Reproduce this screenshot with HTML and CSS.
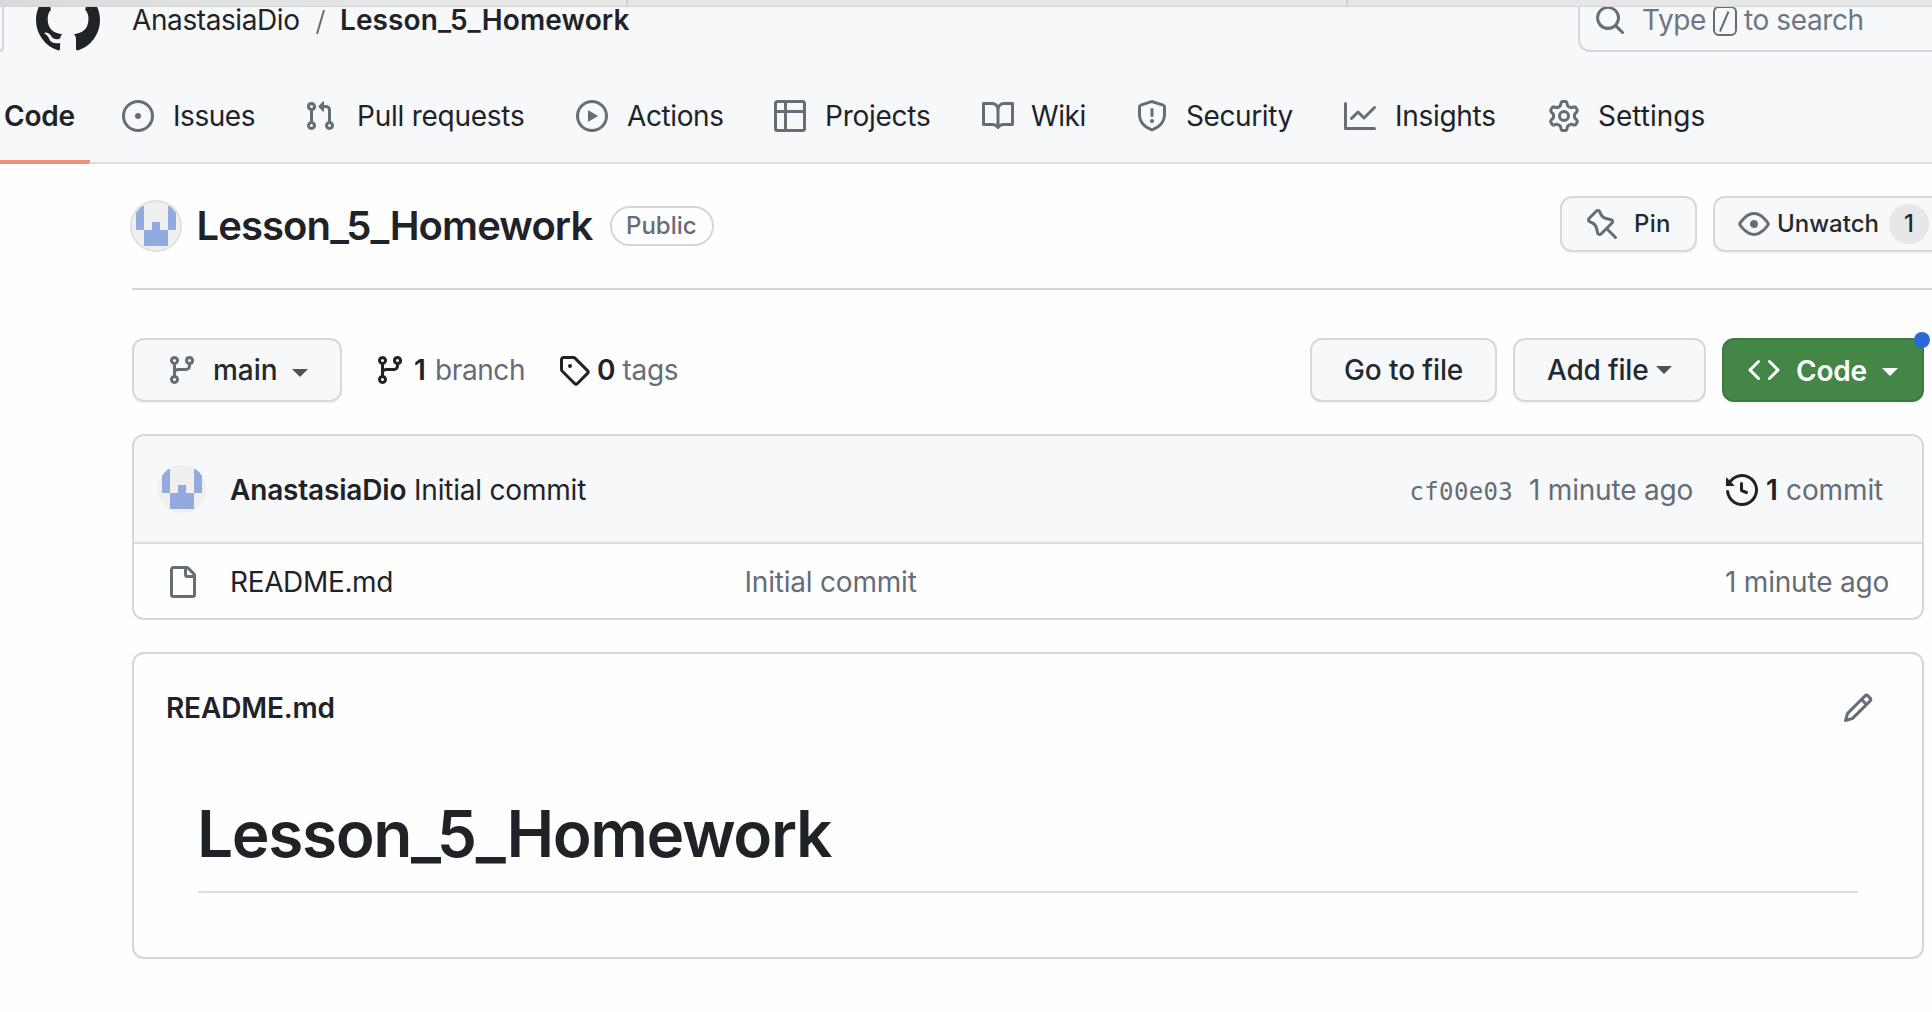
FILE: index.html
```html
<!DOCTYPE html>
<html lang="en">
<head>
<meta charset="utf-8">
<title>AnastasiaDio/Lesson_5_Homework</title>
<link rel="stylesheet" href="styles.css">
</head>
<body>
<svg class="defs" aria-hidden="true">
  <symbol id="branch" viewBox="0 0 16 16"><path d="M9.5 3.25a2.25 2.25 0 1 1 3 2.122V6A2.5 2.5 0 0 1 10 8.5H6a1 1 0 0 0-1 1v1.128a2.251 2.251 0 1 1-1.5 0V5.372a2.25 2.25 0 1 1 1.5 0v1.836A2.493 2.493 0 0 1 6 7h4a1 1 0 0 0 1-1v-.628A2.25 2.25 0 0 1 9.5 3.25Zm-6 0a.75.75 0 1 0 1.5 0 .75.75 0 0 0-1.5 0Zm8.25-.75a.75.75 0 1 0 0 1.5.75.75 0 0 0 0-1.5ZM4.25 12a.75.75 0 1 0 0 1.5.75.75 0 0 0 0-1.5Z"/></symbol>
  <symbol id="identicon" viewBox="0 0 48 48"><path d="M0 0h48v48H0z" fill="#efefef"/><path fill="#92aadd" d="M4 4h8v24H4zM36 4h8v24h-8zM20 20h8v8h-8zM12 28h24v16H12z"/></symbol>
</svg>
<div class="browser-edge"><i class="tab tab-a"></i><i class="tab tab-b"></i></div>
<header class="site-header">
  <div class="global-bar">
    <span class="menu-button"></span>
    <svg class="logo" viewBox="0 0 16 16"><path d="M8 0c4.42 0 8 3.58 8 8a8.013 8.013 0 0 1-5.45 7.59c-.4.08-.55-.17-.55-.38 0-.27.01-1.13.01-2.2 0-.75-.25-1.23-.54-1.48 1.78-.2 3.65-.88 3.65-3.95 0-.88-.31-1.59-.82-2.15.08-.2.36-1.02-.08-2.12 0 0-.67-.22-2.2.82-.64-.18-1.32-.27-2-.27-.68 0-1.36.09-2 .27-1.53-1.03-2.2-.82-2.2-.82-.44 1.1-.16 1.92-.08 2.12-.51.56-.82 1.28-.82 2.15 0 3.06 1.86 3.75 3.64 3.95-.23.2-.44.55-.51 1.07-.46.21-1.61.55-2.33-.66-.15-.24-.6-.83-1.23-.82-.67.01-.27.38.01.53.34.19.73.9.82 1.13.16.45.68 1.31 2.69.94 0 .67.01 1.3.01 1.49 0 .21-.15.45-.55.38A7.995 7.995 0 0 1 0 8c0-4.42 3.58-8 8-8Z"/></svg>
    <div class="crumbs"><span class="t owner">AnastasiaDio</span><svg class="slash" viewBox="0 0 9 26"><path d="M8 1 1 25" stroke="#656d76" stroke-width="2" fill="none"/></svg><b class="t repo">Lesson_5_Homework</b></div>
    <div class="search">
      <svg class="icon" viewBox="0 0 16 16"><path d="M10.68 11.74a6 6 0 0 1-7.922-8.982 6 6 0 0 1 8.982 7.922l3.04 3.04a.749.749 0 0 1-.326 1.275.749.749 0 0 1-.734-.215ZM11.5 7a4.499 4.499 0 1 0-8.997 0A4.499 4.499 0 0 0 11.5 7Z"/></svg>
      <span class="t type">Type</span><svg class="kbd" viewBox="0 0 24 30"><rect x="1" y="1" width="22" height="28" rx="5"/><path d="M15.500 5.500 7 25.500"/></svg><span class="t tosearch">to search</span>
    </div>
  </div>
  <nav class="repo-nav">
    <a class="nav-item current"><span class="t">Code</span></a>
    <a class="nav-item issues"><svg class="icon" viewBox="0 0 16 16"><path d="M8 9.5a1.500 1.500 0 1 0 0-3 1.500 1.500 0 0 0 0 3Z"/><path d="M8 0a8 8 0 1 1 0 16A8 8 0 0 1 8 0ZM1.500 8a6.500 6.500 0 1 0 13 0 6.500 6.500 0 0 0-13 0Z"/></svg><span class="t">Issues</span></a>
    <a class="nav-item pulls"><svg class="icon" viewBox="0 0 16 16"><path d="M1.500 3.250a2.250 2.250 0 1 1 3 2.122v5.256a2.251 2.251 0 1 1-1.500 0V5.372A2.250 2.250 0 0 1 1.500 3.250Zm5.677-.177L9.573.677A.250.250 0 0 1 10 .854V2.500h1A2.500 2.500 0 0 1 13.500 5v5.628a2.251 2.251 0 1 1-1.500 0V5a1 1 0 0 0-1-1h-1v1.646a.250.250 0 0 1-.427.177L7.177 3.427a.250.250 0 0 1 0-.354ZM3.750 2.500a.750.750 0 1 0 0 1.500.750.750 0 0 0 0-1.500Zm0 9.500a.750.750 0 1 0 0 1.500.750.750 0 0 0 0-1.500Zm8.250.750a.750.750 0 1 0 1.500 0 .750.750 0 0 0-1.500 0Z"/></svg><span class="t">Pull requests</span></a>
    <a class="nav-item actions"><svg class="icon" viewBox="0 0 16 16"><path d="M8 0a8 8 0 1 1 0 16A8 8 0 0 1 8 0ZM1.500 8a6.500 6.500 0 1 0 13 0 6.500 6.500 0 0 0-13 0Zm4.879-2.773 4.264 2.559a.250.250 0 0 1 0 .428l-4.264 2.559A.250.250 0 0 1 6 10.559V5.442a.250.250 0 0 1 .379-.215Z"/></svg><span class="t">Actions</span></a>
    <a class="nav-item projects"><svg class="icon" viewBox="0 0 16 16"><path d="M0 1.750C0 .784.784 0 1.750 0h12.500C15.216 0 16 .784 16 1.750v12.500A1.750 1.750 0 0 1 14.250 16H1.750A1.750 1.750 0 0 1 0 14.250ZM6.500 6.500v8h7.750a.250.250 0 0 0 .250-.250V6.500Zm8-1.500V1.750a.250.250 0 0 0-.250-.250H6.500V5Zm-13 1.500v7.750c0 .138.112.250.250.250H5v-8ZM5 5V1.500H1.750a.250.250 0 0 0-.250.250V5Z"/></svg><span class="t">Projects</span></a>
    <a class="nav-item wiki"><svg class="icon" viewBox="0 0 16 16"><path d="M0 1.750A.750.750 0 0 1 .750 1h4.253c1.227 0 2.317.590 3 1.501A3.743 3.743 0 0 1 11.006 1h4.245a.750.750 0 0 1 .750.750v10.500a.750.750 0 0 1-.750.750h-4.507a2.250 2.250 0 0 0-1.591.659l-.622.621a.750.750 0 0 1-1.060 0l-.622-.621A2.250 2.250 0 0 0 5.258 13H.750a.750.750 0 0 1-.750-.750Zm7.251 10.324.004-5.073-.002-2.253A2.250 2.250 0 0 0 5.003 2.500H1.500v9h3.757a3.750 3.750 0 0 1 1.994.574ZM8.755 4.750l-.004 7.322a3.752 3.752 0 0 1 1.992-.572H14.500v-9h-3.495a2.250 2.250 0 0 0-2.250 2.250Z"/></svg><span class="t">Wiki</span></a>
    <a class="nav-item security"><svg class="icon" viewBox="0 0 16 16"><path d="M7.467.133a1.748 1.748 0 0 1 1.066 0l5.250 1.680A1.750 1.750 0 0 1 15 3.480V7c0 1.566-.320 3.182-1.303 4.682-.983 1.498-2.585 2.813-5.032 3.855a1.697 1.697 0 0 1-1.330 0c-2.447-1.042-4.049-2.357-5.032-3.855C1.320 10.182 1 8.566 1 7V3.480a1.755 1.755 0 0 1 1.217-1.667Zm.610 1.429a.250.250 0 0 0-.153 0l-5.250 1.680a.250.250 0 0 0-.174.238V7c0 1.358.275 2.666 1.057 3.860.784 1.194 2.121 2.340 4.366 3.297a.196.196 0 0 0 .154 0c2.245-.956 3.582-2.104 4.366-3.298C13.225 9.666 13.500 8.360 13.500 7V3.480a.251.251 0 0 0-.174-.237l-5.250-1.680ZM8.750 4.750v3a.750.750 0 0 1-1.500 0v-3a.750.750 0 0 1 1.500 0ZM9 10.500a1 1 0 1 1-2 0 1 1 0 0 1 2 0Z"/></svg><span class="t">Security</span></a>
    <a class="nav-item insights"><svg class="icon" viewBox="0 0 16 16"><path d="M1.500 1.750V13.500h13.750a.750.750 0 0 1 0 1.500H.750a.750.750 0 0 1-.750-.750V1.750a.750.750 0 0 1 1.500 0Zm14.280 2.530-5.250 5.250a.750.750 0 0 1-1.060 0L7 7.060 4.280 9.780a.751.751 0 0 1-1.042-.018.751.751 0 0 1-.018-1.042l3.250-3.250a.750.750 0 0 1 1.060 0L10 7.940l4.720-4.720a.751.751 0 0 1 1.042.018.751.751 0 0 1 .018 1.042Z"/></svg><span class="t">Insights</span></a>
    <a class="nav-item settings"><svg class="icon" viewBox="0 0 16 16"><path d="M8 0a8.200 8.200 0 0 1 .701.031C9.444.095 9.990.645 10.160 1.290l.288 1.107c.018.066.079.158.212.224.231.114.454.243.668.386.123.082.233.090.299.071l1.103-.303c.644-.176 1.392.021 1.820.630.270.385.506.792.704 1.218.315.675.111 1.422-.364 1.891l-.814.806c-.049.048-.098.147-.088.294.016.257.016.515 0 .772-.010.147.038.246.088.294l.814.806c.475.469.679 1.216.364 1.891a7.977 7.977 0 0 1-.704 1.217c-.428.610-1.176.807-1.820.630l-1.102-.302c-.067-.019-.177-.011-.300.071a5.909 5.909 0 0 1-.668.386c-.133.066-.194.158-.211.224l-.290 1.106c-.168.646-.715 1.196-1.458 1.260a8.006 8.006 0 0 1-1.402 0c-.743-.064-1.289-.614-1.458-1.260l-.289-1.106c-.018-.066-.079-.158-.212-.224a5.738 5.738 0 0 1-.668-.386c-.123-.082-.233-.090-.299-.071l-1.103.303c-.644.176-1.392-.021-1.820-.630a8.120 8.120 0 0 1-.704-1.218c-.315-.675-.111-1.422.363-1.891l.815-.806c.050-.048.098-.147.088-.294a6.214 6.214 0 0 1 0-.772c.010-.147-.038-.246-.088-.294l-.815-.806C.635 6.045.431 5.298.746 4.623a7.920 7.920 0 0 1 .704-1.217c.428-.610 1.176-.807 1.820-.630l1.102.302c.067.019.177.011.300-.071.214-.143.437-.272.668-.386.133-.066.194-.158.211-.224l.290-1.106C6.009.645 6.556.095 7.299.030 7.530.010 7.764 0 8 0Zm-.571 1.525c-.036.003-.108.036-.137.146l-.289 1.105c-.147.561-.549.967-.998 1.189-.173.086-.340.183-.500.290-.417.278-.970.423-1.529.270l-1.103-.303c-.109-.030-.175.016-.195.045-.220.312-.412.644-.573.990-.014.031-.021.110.059.190l.815.806c.411.406.562.957.530 1.456a4.709 4.709 0 0 0 0 .582c.032.499-.119 1.050-.530 1.456l-.815.806c-.081.080-.073.159-.059.190.162.346.353.677.573.989.020.030.085.076.195.046l1.102-.303c.560-.153 1.113-.008 1.530.270.161.107.328.204.501.290.447.222.850.629.997 1.189l.289 1.105c.029.109.101.143.137.146a6.600 6.600 0 0 0 1.142 0c.036-.003.108-.036.137-.146l.289-1.105c.147-.561.549-.967.998-1.189.173-.086.340-.183.500-.290.417-.278.970-.423 1.529-.270l1.103.303c.109.029.175-.016.195-.045.220-.313.411-.644.573-.990.014-.031.021-.110-.059-.190l-.815-.806c-.411-.406-.562-.957-.530-1.456a4.709 4.709 0 0 0 0-.582c-.032-.499.119-1.050.530-1.456l.815-.806c.081-.080.073-.159.059-.190a6.464 6.464 0 0 0-.573-.989c-.020-.030-.085-.076-.195-.046l-1.102.303c-.560.153-1.113.008-1.530-.270a4.440 4.440 0 0 0-.501-.290c-.447-.222-.850-.629-.997-1.189l-.289-1.105c-.029-.110-.101-.143-.137-.146a6.600 6.600 0 0 0-1.142 0ZM11 8a3 3 0 1 1-6 0 3 3 0 0 1 6 0ZM9.500 8a1.500 1.500 0 1 0-3.001.001A1.500 1.500 0 0 0 9.500 8Z"/></svg><span class="t">Settings</span></a>
  </nav>
</header>
<main class="content">
  <div class="repo-title">
    <svg class="avatar ringed"><use href="#identicon"/></svg>
    <h2 class="t name">Lesson_5_Homework</h2>
    <span class="badge"><span class="t">Public</span></span>
    <a class="button small pin"><svg class="icon" viewBox="0 0 16 16"><path d="m11.294.984 3.722 3.722a1.750 1.750 0 0 1-.504 2.826l-1.327.613a3.089 3.089 0 0 0-1.707 2.084l-.584 2.454c-.317 1.332-1.972 1.800-2.940.832L5.750 11.311 1.780 15.280a.749.749 0 1 1-1.060-1.060l3.969-3.970-2.204-2.204c-.968-.968-.500-2.623.832-2.940l2.454-.584a3.080 3.080 0 0 0 2.084-1.707l.613-1.327a1.750 1.750 0 0 1 2.826-.504ZM6.283 9.723l2.732 2.731a.250.250 0 0 0 .420-.119l.584-2.454a4.586 4.586 0 0 1 2.537-3.098l1.328-.613a.250.250 0 0 0 .072-.404l-3.722-3.722a.250.250 0 0 0-.404.072l-.613 1.328a4.584 4.584 0 0 1-3.098 2.537l-2.454.584a.250.250 0 0 0-.119.420l2.731 2.732Z" transform="matrix(-1 0 0 1 16 0)"/></svg><span class="t">Pin</span></a>
    <a class="button small watch"><svg class="icon" viewBox="0 0 16 16"><path d="M8 2c1.981 0 3.671.992 4.933 2.078 1.270 1.091 2.187 2.345 2.637 3.023a1.620 1.620 0 0 1 0 1.798c-.450.678-1.367 1.932-2.637 3.023C11.670 13.008 9.981 14 8 14c-1.981 0-3.671-.992-4.933-2.078C1.797 10.830.880 9.576.430 8.898a1.620 1.620 0 0 1 0-1.798c.450-.677 1.367-1.931 2.637-3.022C4.330 2.992 6.019 2 8 2ZM1.679 7.932a.120.120 0 0 0 0 .136c.411.622 1.241 1.750 2.366 2.717C5.176 11.758 6.527 12.500 8 12.500c1.473 0 2.825-.742 3.955-1.715 1.124-.967 1.954-2.096 2.366-2.717a.120.120 0 0 0 0-.136c-.412-.621-1.242-1.750-2.366-2.717C10.824 4.242 9.473 3.500 8 3.500c-1.473 0-2.825.742-3.955 1.715-1.124.967-1.954 2.096-2.366 2.717ZM8 10a2 2 0 1 1-.001-3.999A2 2 0 0 1 8 10Z"/></svg><span class="t">Unwatch</span><span class="counter">1</span></a>
  </div>
  <div class="file-nav">
    <a class="button branch-select"><svg class="icon"><use href="#branch"/></svg><span class="t">main</span><i class="caret"></i></a>
    <a class="stat branches"><svg class="icon"><use href="#branch"/></svg><b class="t">1</b><span class="t">branch</span></a>
    <a class="stat tags"><svg class="icon" viewBox="0 0 16 16"><path d="M1 7.775V2.750C1 1.784 1.784 1 2.750 1h5.025c.464 0 .910.184 1.238.513l6.250 6.250a1.750 1.750 0 0 1 0 2.474l-5.026 5.026a1.750 1.750 0 0 1-2.474 0l-6.250-6.250A1.752 1.752 0 0 1 1 7.775Zm1.500 0c0 .066.026.130.073.177l6.250 6.250a.250.250 0 0 0 .354 0l5.025-5.025a.250.250 0 0 0 0-.354l-6.250-6.250a.250.250 0 0 0-.177-.073H2.750a.250.250 0 0 0-.250.250ZM6 5a1 1 0 1 1 0 2 1 1 0 0 1 0-2Z"/></svg><b class="t">0</b><span class="t">tags</span></a>
    <a class="button goto"><span class="t">Go to file</span></a>
    <a class="button add"><span class="t">Add file</span><i class="caret"></i></a>
    <a class="button code"><svg class="icon" viewBox="0 0 16 16"><path d="m11.280 3.220 4.250 4.250a.750.750 0 0 1 0 1.060l-4.250 4.250a.749.749 0 0 1-1.275-.326.749.749 0 0 1 .215-.734L13.940 8l-3.720-3.720a.749.749 0 0 1 .326-1.275.749.749 0 0 1 .734.215Zm-6.560 0a.751.751 0 0 1 1.042.018.751.751 0 0 1 .018 1.042L2.060 8l3.720 3.720a.749.749 0 0 1-.326 1.275.749.749 0 0 1-.734-.215L.470 8.530a.750.750 0 0 1 0-1.060Z"/></svg><span class="t">Code</span><i class="caret"></i><i class="dot"></i></a>
  </div>
  <section class="panel files">
    <div class="commit-row">
      <svg class="avatar"><use href="#identicon"/></svg>
      <b class="t author">AnastasiaDio</b><span class="t message">Initial commit</span>
      <span class="t sha">cf00e03</span><span class="t when">1 minute ago</span>
      <svg class="icon history" viewBox="0 0 16 16"><path d="m.427 1.927 1.215 1.215a8.002 8.002 0 1 1-1.600 5.685.750.750 0 1 1 1.493-.154 6.500 6.500 0 1 0 1.180-4.458l1.358 1.358A.250.250 0 0 1 3.896 6H.250A.250.250 0 0 1 0 5.750V2.104a.250.250 0 0 1 .427-.177ZM7.750 4a.750.750 0 0 1 .750.750v2.992l2.028.812a.750.750 0 0 1-.557 1.392l-2.500-1A.751.751 0 0 1 7 8.250v-3.500A.750.750 0 0 1 7.750 4Z"/></svg><b class="t num">1</b><span class="t commits">commit</span>
    </div>
    <div class="file-row">
      <svg class="icon" viewBox="0 0 16 16"><path d="M2 1.750C2 .784 2.784 0 3.750 0h6.586c.464 0 .909.184 1.237.513l2.914 2.914c.329.328.513.773.513 1.237v9.586A1.750 1.750 0 0 1 13.250 16h-9.500A1.750 1.750 0 0 1 2 14.250Zm1.750-.250a.250.250 0 0 0-.250.250v12.500c0 .138.112.250.250.250h9.500a.250.250 0 0 0 .250-.250V6h-2.750A1.750 1.750 0 0 1 9 4.250V1.500Zm6.750.062V4.250c0 .138.112.250.250.250h2.688l-.011-.013-2.914-2.914-.013-.011Z"/></svg>
      <span class="t file">README.md</span><span class="t desc">Initial commit</span><span class="t ago">1 minute ago</span>
    </div>
  </section>
  <section class="panel readme">
    <div class="readme-head"><b class="t">README.md</b><svg class="icon" viewBox="0 0 16 16"><path d="M11.013 1.427a1.750 1.750 0 0 1 2.474 0l1.086 1.086a1.750 1.750 0 0 1 0 2.474l-8.610 8.610c-.210.210-.470.364-.756.445l-3.251.930a.750.750 0 0 1-.927-.928l.929-3.250c.081-.286.235-.547.445-.758l8.610-8.610Zm.176 4.823L9.750 4.810l-6.286 6.287a.253.253 0 0 0-.064.108l-.558 1.953 1.953-.558a.253.253 0 0 0 .108-.064Zm1.238-3.763a.250.250 0 0 0-.354 0L10.811 3.750l1.439 1.440 1.263-1.263a.250.250 0 0 0 0-.354Z"/></svg></div>
    <h1 class="readme-title"><span class="t">Lesson_5_Homework</span></h1>
  </section>
</main>
</body>
</html>
```
FILE: styles.css
```css
* { box-sizing: border-box; }
body { margin: 0; height: 1012px; overflow: hidden; background: #fefefe; color: #1f2328; font: 400 28px/36px Inter, "Liberation Sans", sans-serif; }
b { font-weight: 600; }
svg { display: block; flex: none; fill: currentColor; }
i { display: block; }
.defs { position: absolute; width: 0; height: 0; }
.icon { width: 32px; height: 32px; color: #656d76; }
.t { white-space: nowrap; flex: none; }

/* Bottom edge of the browser toolbar, over the page */
.browser-edge { position: absolute; z-index: 2; top: 0; left: 0; width: 100%; height: 7px; display: flex; background: linear-gradient(90deg, #d9dbda, #e6e6e6 420px); border-bottom: 1px solid #d2d4d5; }
.tab { flex: none; height: 6px; border-right: 2px solid #d0d1d1; }
.tab-a { width: 628px; }
.tab-b { width: 720px; }

/* Header */
.site-header { height: 164px; background: linear-gradient(#d8dee4, #d8dee4) 0 100% / 100% 2px no-repeat #f6f8fa; }
.global-bar { display: flex; height: 68px; }
.menu-button { width: 4px; height: 52px; border: solid #d0d7de; border-width: 0 2px 2px 0; border-radius: 0 0 12px 0; }
.logo { width: 64px; height: 64px; margin: -12px 0 0 32px; }
.crumbs { display: flex; align-items: center; height: 40px; margin-left: 32px; }
.owner { width: 184px; letter-spacing: -.4px; }
.slash { width: 9px; height: 26px; margin: 4px 15px 0 0; }
.repo { letter-spacing: .1px; }
.search { display: flex; align-items: center; width: 354px; height: 52px; margin-left: auto; padding: 0 0 10px 14px; border: 2px solid #d0d7de; border-width: 0 0 2px 2px; border-radius: 0 0 0 12px; color: #6e7781; }
.search .icon { margin-top: -1px; }
.type { width: 71px; margin-left: 16px; letter-spacing: -.4px; }
.kbd { width: 24px; height: 30px; margin: 2px 7px 0 0; fill: none; stroke: #656d76; stroke-width: 2; }
.tosearch { letter-spacing: -.4px; }

.repo-nav { display: flex; height: 96px; }
.nav-item { display: flex; flex: none; align-items: center; height: 96px; gap: 19px; }
.current { width: 90px; margin-right: 32px; padding-left: 4px; background: linear-gradient(#ee9277, #ee9277) 0 100% / 100% 4px no-repeat; border-radius: 0 0 2px 0; font-weight: 600; letter-spacing: -.2px; }
.issues { width: 182px; letter-spacing: -.45px; }
.pulls { width: 272px; gap: 21px; letter-spacing: -.25px; }
.actions { width: 198px; letter-spacing: -.4px; }
.projects { width: 208px; letter-spacing: -.25px; }
.wiki { width: 154px; gap: 17px; letter-spacing: -.4px; }
.security { width: 208px; gap: 18px; letter-spacing: -.4px; }
.insights { width: 204px; letter-spacing: -.3px; }
.settings { gap: 18px; }

/* Repository title */
.content { padding-left: 132px; }
.repo-title { display: flex; align-items: center; height: 126px; border-bottom: 2px solid #d0d7de; }
.avatar { width: 48px; height: 48px; border-radius: 50%; }
.ringed { box-shadow: 0 0 0 2px #dcdee0; }
.name { width: 413.500px; margin: 0 0 0 16.500px; font-size: 40px; font-weight: 620; letter-spacing: -.9px; }
.badge { width: 104px; height: 40px; padding: 0 14px; border: 2px solid #d0d7de; border-radius: 20px; color: #656d76; font-size: 24px; font-weight: 500; }
.button { position: relative; display: flex; flex: none; align-items: center; height: 64px; border: 2px solid #d6d9db; border-radius: 12px; background: #f6f8fa; box-shadow: 0 2px 0 rgba(31, 35, 40, .04); color: #24292f; font-weight: 500; }
.small { height: 56px; margin-top: -4px; font-size: 24px; }
.pin { width: 137px; margin-left: auto; padding-left: 24px; letter-spacing: .3px; }
.pin .icon { margin: -1px 16px 0 0; }
.watch { width: 250px; margin-left: 16px; margin-right: -31px; padding-left: 23px; }
.watch .t { width: 112px; margin-left: 7px; }
.counter { width: 40px; height: 40px; border-radius: 20px; background: #e5e7e9; line-height: 40px; text-align: center; }

/* Branch and file actions */
.file-nav { display: flex; align-items: center; height: 64px; margin: 48px 8px 32px 0; }
.caret { border: 8px solid transparent; border-top-color: #4f5358; border-bottom: 0; }
.branch-select { width: 210px; margin-right: 32px; padding-left: 32px; }
.branch-select .t { width: 79px; margin-left: 15px; }
.branch-select .caret { margin-top: 6px; }
.stat { display: flex; align-items: center; color: #656d76; }
.branches .icon { margin-right: 8px; }
.branches b { width: 21px; }
.branches span { width: 123px; letter-spacing: -.4px; }
.tags .icon { margin-right: 7px; }
.tags b { width: 25.500px; }
.tags span { letter-spacing: -.3px; }
.stat .icon, .stat b, .icon.history, .num { color: #1f2328; }
.goto { width: 187px; margin: 0 16px 0 auto; padding-left: 32px; letter-spacing: -.1px; }
.add { width: 193px; margin-right: 16px; padding-left: 32px; }
.add .t { width: 109px; letter-spacing: -.2px; }
.code { width: 202px; padding-left: 24px; background: #438646; border-color: #3c7940; color: #fff; font-weight: 600; }
.code .icon { color: #fff; }
.code .t { width: 86px; margin: 2px 0 0 16px; letter-spacing: -.2px; }
.code .caret { margin-top: 4px; border-top-color: #fff; }
.dot { position: absolute; top: -8px; right: -8px; width: 16px; height: 16px; border-radius: 50%; background: #2969d8; }

/* Files */
.panel { width: 1792px; border: 2px solid #d0d7de; border-radius: 12px; overflow: hidden; }
.files { height: 186px; margin-bottom: 32px; }
.commit-row { display: grid; grid-template-columns: 72px 184px 1fr 119.500px 197px 40px 20px 108px; align-items: center; height: 108px; padding: 0 28px 0 24px; background: #f6f8fa; border-bottom: 2px solid #d8dee4; }
.commit-row .t, .history { margin-top: 2px; }
.author { letter-spacing: -.18px; }
.message, .desc { letter-spacing: -.2px; }
.sha { font: 24px/36px "DejaVu Sans Mono", "Liberation Mono", monospace; letter-spacing: .35px; }
.commit-row .sha { margin-top: 5px; }
.sha, .when, .commits, .desc, .ago { color: #656d76; }
.when, .ago { letter-spacing: -.2px; }
.commits { letter-spacing: -.1px; }
.file-row { display: grid; grid-template-columns: 64px 514.500px 1fr 197px; align-items: center; height: 76px; padding-left: 32px; }
.file { letter-spacing: -.35px; }

/* Readme */
.readme { height: 307px; }
.readme-head { display: flex; align-items: center; justify-content: space-between; height: 108px; padding: 0 48px 0 32px; letter-spacing: -.15px; }
.readme-title { height: 99px; margin: 32px 64px 0; border-bottom: 2px solid #d8dee4; font-size: 64px; font-weight: 620; line-height: 80px; letter-spacing: -1.400px; text-indent: -1px; }
```
